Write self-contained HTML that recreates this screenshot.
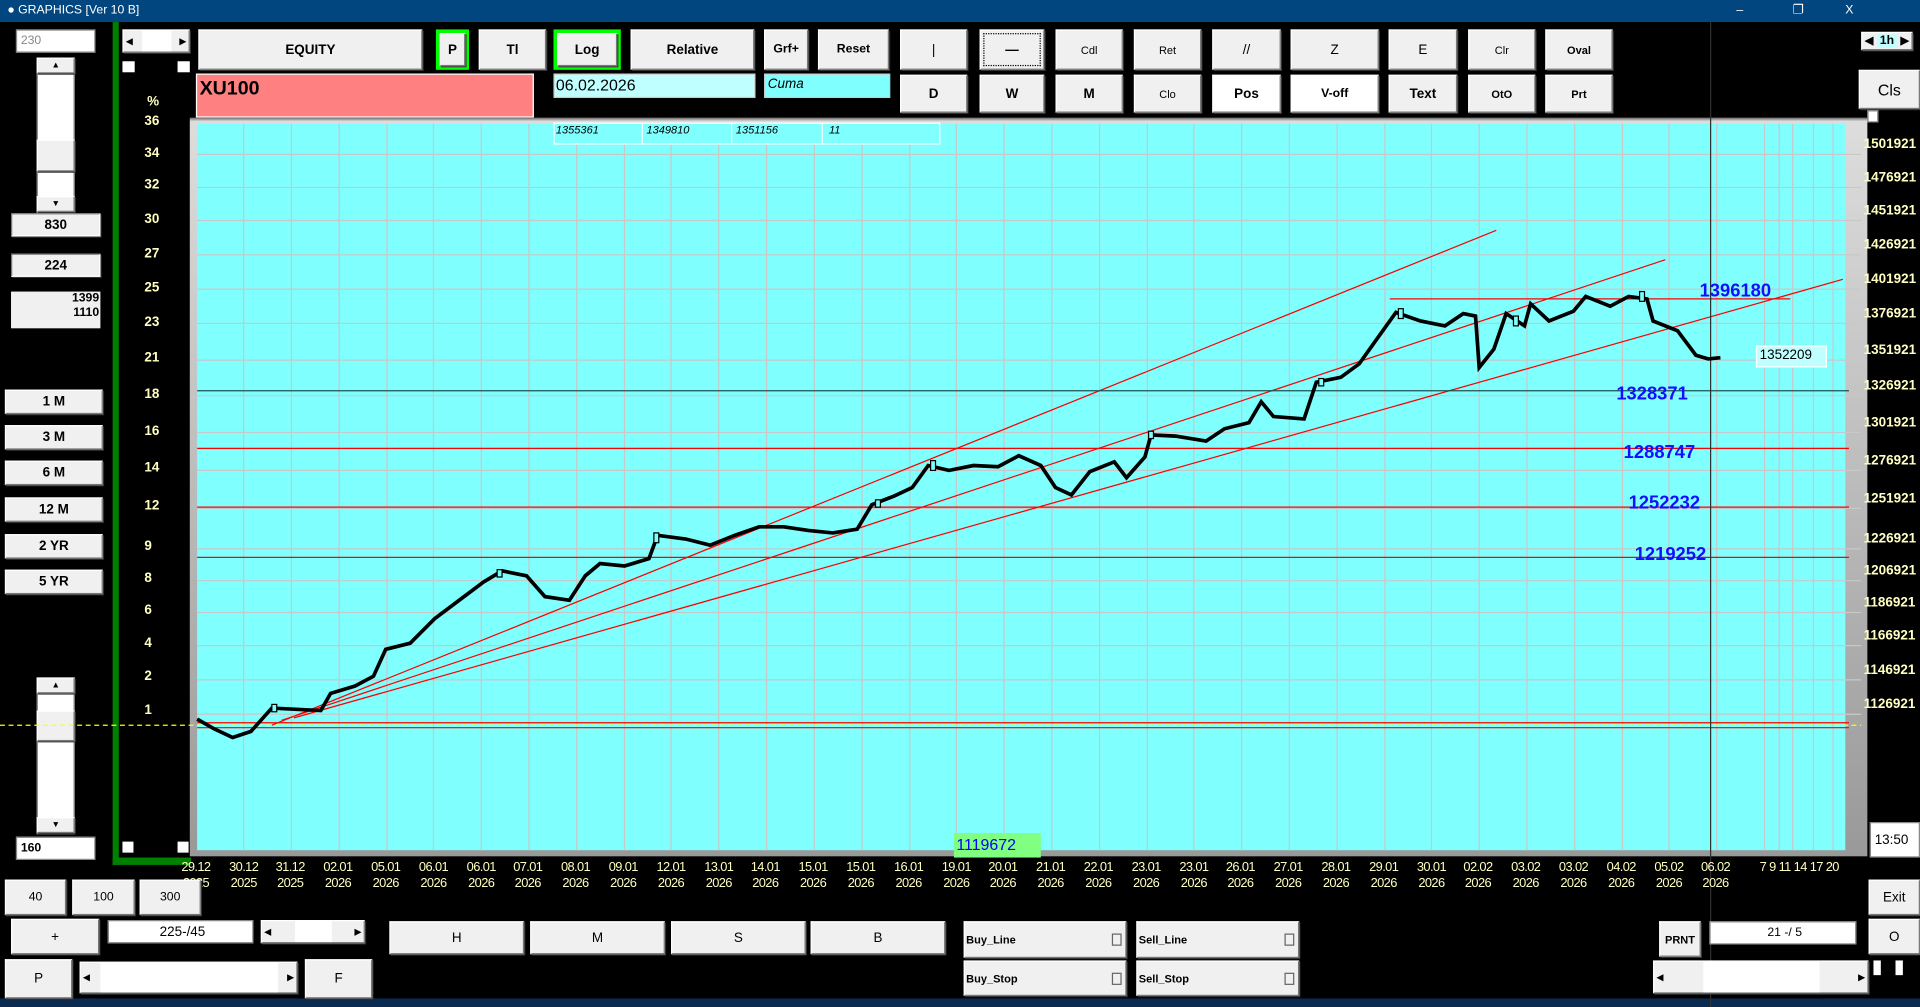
<!DOCTYPE html>
<html><head><meta charset="utf-8"><style>
*{margin:0;padding:0;box-sizing:border-box}
html,body{width:1920px;height:1007px;overflow:hidden;background:#000}
#w{position:absolute;left:0;top:0;width:1568px;height:822px;transform:scale(1.22449,1.22506);transform-origin:0 0;background:#000;font-family:"Liberation Sans",sans-serif}
.a{position:absolute}
.b{position:absolute;background:#f0f0f0;border:1px solid #fff;border-right-color:#777;border-bottom-color:#777;box-shadow:1px 1px 0 #333;display:flex;align-items:center;justify-content:center;font-size:11px;font-weight:bold;color:#000}
.t{position:absolute;background:#fff;border:1px solid #888;font-size:10px;display:flex;align-items:center;padding-left:3px}
.y{position:absolute;color:#ffffc0;font-size:11px;font-weight:bold;text-align:center;width:20px}
.r{position:absolute;color:#ffffc0;font-size:11px;font-weight:bold;left:1522px}
.d{position:absolute;color:#ffffc0;font-size:10.5px;letter-spacing:-0.5px;width:36px;text-align:center;line-height:13px;white-space:nowrap}
.bl{position:absolute;color:#1010ff;font-size:15px;font-weight:bold}
</style></head><body><div id="w">
<div class="a" style="left:0;top:0;width:1568px;height:18px;background:#02467f;color:#fff;font-size:10px;line-height:18px;padding-left:6px">● GRAPHICS [Ver 10 B]<span style="position:absolute;left:1418px">–</span><span style="position:absolute;left:1464px">❐</span><span style="position:absolute;left:1507px">X</span></div>
<div class="a" style="left:0;top:815px;width:1568px;height:7px;background:#0a2a50"></div>
<div class="a" style="left:92px;top:18px;width:5px;height:688px;background:#008000"></div>
<div class="a" style="left:92px;top:700px;width:64px;height:6px;background:#008000"></div>
<!-- left panel -->
<div class="t" style="left:13px;top:24px;width:65px;height:19px;color:#888">230</div>
<div class="a" style="left:30px;top:47px;width:31px;height:127px;background:#fff;border:1px solid #888"></div>
<div class="b" style="left:30px;top:47px;width:31px;height:13px;font-size:7px">▲</div>
<div class="b" style="left:30px;top:114px;width:31px;height:26px"></div>
<div class="b" style="left:30px;top:160px;width:31px;height:13px;font-size:7px">▼</div>
<div class="b" style="left:9px;top:174px;width:73px;height:19px;border-color:#777 #fff #fff #777">830</div>
<div class="b" style="left:9px;top:207px;width:73px;height:19px;border-color:#777 #fff #fff #777">224</div>
<div class="a" style="left:9px;top:238px;width:73px;height:30px;background:#f0f0f0;font-size:10px;font-weight:bold;text-align:right;padding-right:1px;line-height:12px">1399<br>1110</div>
<div class="b" style="left:4px;top:318px;width:80px;height:20px">1 M</div>
<div class="b" style="left:4px;top:347px;width:80px;height:20px">3 M</div>
<div class="b" style="left:4px;top:376px;width:80px;height:20px">6 M</div>
<div class="b" style="left:4px;top:406px;width:80px;height:20px">12 M</div>
<div class="b" style="left:4px;top:436px;width:80px;height:20px">2 YR</div>
<div class="b" style="left:4px;top:465px;width:80px;height:20px">5 YR</div>
<div class="a" style="left:30px;top:553px;width:31px;height:128px;background:#fff;border:1px solid #888"></div>
<div class="b" style="left:30px;top:553px;width:31px;height:13px;font-size:7px">▲</div>
<div class="b" style="left:30px;top:580px;width:31px;height:25px"></div>
<div class="b" style="left:30px;top:667px;width:31px;height:13px;font-size:7px">▼</div>
<div class="t" style="left:13px;top:683px;width:65px;height:19px;font-weight:bold">160</div>
<div class="b" style="left:100px;top:24px;width:55px;height:19px;font-size:7px;justify-content:space-between;padding:0 2px">◀<span style="width:24px;height:17px;background:#fff"></span>▶</div>
<div class="a" style="left:100px;top:50px;width:10px;height:9px;background:#fff"></div>
<div class="a" style="left:145px;top:50px;width:10px;height:9px;background:#fff"></div>
<div class="a" style="left:100px;top:687px;width:9px;height:9px;background:#fff"></div>
<div class="a" style="left:145px;top:687px;width:9px;height:9px;background:#fff"></div>
<div class="y" style="left:115px;top:77px">%</div>
<div class="y" style="left:114px;top:93px">36</div><div class="y" style="left:114px;top:119px">34</div><div class="y" style="left:114px;top:145px">32</div><div class="y" style="left:114px;top:173px">30</div><div class="y" style="left:114px;top:201px">27</div><div class="y" style="left:114px;top:229px">25</div><div class="y" style="left:114px;top:257px">23</div><div class="y" style="left:114px;top:286px">21</div><div class="y" style="left:114px;top:316px">18</div><div class="y" style="left:114px;top:346px">16</div><div class="y" style="left:114px;top:376px">14</div><div class="y" style="left:114px;top:407px">12</div><div class="y" style="left:111px;top:440px">9</div><div class="y" style="left:111px;top:466px">8</div><div class="y" style="left:111px;top:492px">6</div><div class="y" style="left:111px;top:519px">4</div><div class="y" style="left:111px;top:546px">2</div><div class="y" style="left:111px;top:574px">1</div>
<!-- top buttons -->
<div class="b" style="left:162px;top:24px;width:183px;height:33px">EQUITY</div>
<div class="a" style="left:356px;top:24px;width:27px;height:33px;background:#00ff00"></div><div class="b" style="left:359px;top:27px;width:21px;height:27px">P</div>
<div class="b" style="left:391px;top:24px;width:55px;height:33px">Tl</div>
<div class="a" style="left:452px;top:24px;width:55px;height:33px;background:#00ff00"></div><div class="b" style="left:455px;top:27px;width:49px;height:27px">Log</div>
<div class="b" style="left:515px;top:24px;width:101px;height:33px">Relative</div>
<div class="b" style="left:624px;top:24px;width:36px;height:33px;font-size:10px">Grf+</div>
<div class="b" style="left:668px;top:24px;width:58px;height:33px;font-size:10px">Reset</div>
<div class="b" style="left:735px;top:24px;width:55px;height:33px;font-weight:normal">|</div>
<div class="b" style="left:800px;top:24px;width:53px;height:33px;outline:1px dotted #000;outline-offset:-4px">—</div>
<div class="b" style="left:862px;top:24px;width:55px;height:33px;font-size:9px;font-weight:normal">Cdl</div>
<div class="b" style="left:926px;top:24px;width:55px;height:33px;font-size:9px;font-weight:normal">Ret</div>
<div class="b" style="left:990px;top:24px;width:56px;height:33px;font-weight:normal">//</div>
<div class="b" style="left:1054px;top:24px;width:72px;height:33px;font-weight:normal">Z</div>
<div class="b" style="left:1134px;top:24px;width:56px;height:33px;font-weight:normal">E</div>
<div class="b" style="left:1199px;top:24px;width:55px;height:33px;font-size:9px;font-weight:normal">Clr</div>
<div class="b" style="left:1262px;top:24px;width:55px;height:33px;font-size:9px">Oval</div>
<div class="b" style="left:735px;top:61px;width:55px;height:31px">D</div>
<div class="b" style="left:800px;top:61px;width:53px;height:31px">W</div>
<div class="b" style="left:862px;top:61px;width:55px;height:31px">M</div>
<div class="b" style="left:926px;top:61px;width:55px;height:31px;font-size:9px;font-weight:normal">Clo</div>
<div class="b" style="left:990px;top:61px;width:56px;height:31px;background:#fff">Pos</div>
<div class="b" style="left:1054px;top:61px;width:72px;height:31px;background:#fff;font-size:10px">V-off</div>
<div class="b" style="left:1134px;top:61px;width:56px;height:31px">Text</div>
<div class="b" style="left:1199px;top:61px;width:55px;height:31px;font-size:9px">OtO</div>
<div class="b" style="left:1262px;top:61px;width:55px;height:31px;font-size:9px">Prt</div>
<div class="a" style="left:160px;top:60px;width:276px;height:36px;background:#ff8080;border:1px solid #fff;font-size:16px;font-weight:bold;padding:3px 2px">XU100</div>
<div class="a" style="left:452px;top:60px;width:165px;height:20px;background:#c0ffff;border:1px solid #ccc;font-size:13px;padding:1px 1px">06.02.2026</div>
<div class="a" style="left:624px;top:60px;width:103px;height:20px;background:#80ffff;border:1px solid #ccc;font-size:11px;font-style:italic;padding:2px 2px">Cuma</div>
<!-- right -->
<div class="b" style="left:1520px;top:26px;width:42px;height:15px;font-size:9px;justify-content:space-between;padding:0 2px">◀<span style="background:#c0ffff;font-size:10px;padding:0 2px">1h</span>▶</div>
<div class="b" style="left:1518px;top:57px;width:50px;height:32px;font-weight:normal;font-size:13px">Cls</div>
<div class="a" style="left:1525px;top:90px;width:9px;height:10px;background:#fff;border:1px solid #888"></div>
<div class="t" style="left:1527px;top:671px;width:41px;height:29px;font-size:11px">13:50</div>
<!-- chart -->
<div class="a" style="left:155px;top:96px;width:1370px;height:603px;background:linear-gradient(#666,#ddd 3px,#999)"></div>
<svg class="a" style="left:0;top:0" width="1568" height="822">
<rect x="161" y="101" width="1346" height="593" fill="#80ffff"/>
<g stroke="#c8c8c8" stroke-width="1">
<path d="M199 101V694M238 101V694M277 101V694M316 101V694M354 101V694M393 101V694M432 101V694M471 101V694M510 101V694M548 101V694M587 101V694M626 101V694M665 101V694M704 101V694M743 101V694M781 101V694M820 101V694M859 101V694M898 101V694M937 101V694M975 101V694M1014 101V694M1053 101V694M1092 101V694M1131 101V694M1169 101V694M1208 101V694M1247 101V694M1286 101V694M1325 101V694M1363 101V694M1402 101V694M1441 101V694M1453 101V694M1464 101V694M1481 101V694M1497 101V694"/>
<path d="M161 126H1520M161 153H1520M161 180H1520M161 208H1520M161 236H1520M161 264H1520M161 294H1520M161 323H1520M161 353H1520M161 384H1520M161 415H1520M161 448H1520M161 474H1520M161 500H1520M161 527H1520M161 555H1520M161 583H1520"/>
</g>
<path d="M0 592H1520" stroke="#ffff00" stroke-width="1" stroke-dasharray="4 3"/>
<g stroke="#ff0000" stroke-width="1" fill="none">
<path d="M161 366H1510M161 414H1510M161 455H1510M161 590H1510M161 594H1510"/>
<path d="M1135 244H1462"/>
<path d="M222 592L1222 188M230 588L1360 212M240 586L1505 228"/>
</g>
<path d="M161 319H1510" stroke="#205050" stroke-width="1"/>
<path d="M1397 18V822" stroke="#303030" stroke-width="1"/>
<polyline fill="none" stroke="#000" stroke-width="3" stroke-linejoin="miter" points="161,587 175,595 190,602 205,597 222,578 262,580 270,566 290,560 305,552 315,530 335,525 355,505 375,490 395,475 410,466 430,470 445,487 465,490 478,470 490,460 510,462 530,456 537,437 560,440 580,445 600,437 620,430 640,430 660,433 680,435 700,432 712,412 730,405 745,398 758,380 775,384 795,380 815,381 832,372 850,380 862,398 875,404 890,385 910,377 920,390 935,373 940,355 960,356 985,360 1000,350 1020,345 1030,328 1040,340 1065,342 1075,312 1095,308 1110,297 1125,276 1140,255 1160,262 1180,266 1195,256 1205,258 1208,300 1220,285 1230,256 1245,266 1250,248 1265,262 1285,254 1295,242 1315,250 1330,242 1345,244 1350,262 1370,270 1385,290 1395,293 1405,292"/>
<g fill="#80ffff" stroke="#000" stroke-width="1"><rect x="222" y="575" width="4" height="6"/><rect x="406" y="465" width="4" height="6"/><rect x="534" y="435" width="4" height="8"/><rect x="715" y="408" width="4" height="6"/><rect x="760" y="376" width="4" height="8"/><rect x="938" y="352" width="4" height="6"/><rect x="1077" y="309" width="4" height="6"/><rect x="1142" y="252" width="4" height="8"/><rect x="1236" y="258" width="4" height="8"/><rect x="1339" y="238" width="4" height="8"/></g>
</svg>
<div class="a" style="left:452px;top:100px;width:316px;height:18px;background:#80ffff;border:1px solid #fff"></div>
<div class="a" style="left:452px;top:101px;font-size:9px;font-style:italic;width:316px"><span class="a" style="left:2px">1355361</span><span class="a" style="left:76px">1349810</span><span class="a" style="left:149px">1351156</span><span class="a" style="left:225px">11</span></div>
<div class="a" style="left:524px;top:100px;width:1px;height:18px;background:#fff"></div><div class="a" style="left:597px;top:100px;width:1px;height:18px;background:#fff"></div><div class="a" style="left:671px;top:100px;width:1px;height:18px;background:#fff"></div>
<div class="bl" style="left:1388px;top:229px">1396180</div>
<div class="bl" style="left:1320px;top:313px">1328371</div>
<div class="bl" style="left:1326px;top:361px">1288747</div>
<div class="bl" style="left:1330px;top:402px">1252232</div>
<div class="bl" style="left:1335px;top:444px">1219252</div>
<div class="a" style="left:1434px;top:282px;width:58px;height:18px;background:#c0ffff;border:1px solid #fff;font-size:11px;padding:1px 2px">1352209</div>
<div class="a" style="left:779px;top:680px;width:71px;height:20px;background:#80ff80;color:#0000ff;font-size:13px;padding:2px 2px">1119672</div>
<div class="r" style="top:112px">1501921</div><div class="r" style="top:139px">1476921</div><div class="r" style="top:166px">1451921</div><div class="r" style="top:194px">1426921</div><div class="r" style="top:222px">1401921</div><div class="r" style="top:250px">1376921</div><div class="r" style="top:280px">1351921</div><div class="r" style="top:309px">1326921</div><div class="r" style="top:339px">1301921</div><div class="r" style="top:370px">1276921</div><div class="r" style="top:401px">1251921</div><div class="r" style="top:434px">1226921</div><div class="r" style="top:460px">1206921</div><div class="r" style="top:486px">1186921</div><div class="r" style="top:513px">1166921</div><div class="r" style="top:541px">1146921</div><div class="r" style="top:569px">1126921</div>
<!-- dates -->
<div class="a" style="left:0;top:702px">
<div class="d" style="left:142px">29.12<br>2025</div><div class="d" style="left:181px">30.12<br>2025</div><div class="d" style="left:219px">31.12<br>2025</div><div class="d" style="left:258px">02.01<br>2026</div><div class="d" style="left:297px">05.01<br>2026</div><div class="d" style="left:336px">06.01<br>2026</div><div class="d" style="left:375px">06.01<br>2026</div><div class="d" style="left:413px">07.01<br>2026</div><div class="d" style="left:452px">08.01<br>2026</div><div class="d" style="left:491px">09.01<br>2026</div><div class="d" style="left:530px">12.01<br>2026</div><div class="d" style="left:569px">13.01<br>2026</div><div class="d" style="left:607px">14.01<br>2026</div><div class="d" style="left:646px">15.01<br>2026</div><div class="d" style="left:685px">15.01<br>2026</div><div class="d" style="left:724px">16.01<br>2026</div><div class="d" style="left:763px">19.01<br>2026</div><div class="d" style="left:801px">20.01<br>2026</div><div class="d" style="left:840px">21.01<br>2026</div><div class="d" style="left:879px">22.01<br>2026</div><div class="d" style="left:918px">23.01<br>2026</div><div class="d" style="left:957px">23.01<br>2026</div><div class="d" style="left:995px">26.01<br>2026</div><div class="d" style="left:1034px">27.01<br>2026</div><div class="d" style="left:1073px">28.01<br>2026</div><div class="d" style="left:1112px">29.01<br>2026</div><div class="d" style="left:1151px">30.01<br>2026</div><div class="d" style="left:1189px">02.02<br>2026</div><div class="d" style="left:1228px">03.02<br>2026</div><div class="d" style="left:1267px">03.02<br>2026</div><div class="d" style="left:1306px">04.02<br>2026</div><div class="d" style="left:1345px">05.02<br>2026</div><div class="d" style="left:1383px">06.02<br>2026</div>
<div class="d" style="left:1437px;width:90px;text-align:left;word-spacing:0px">7 9 11 14 17 20</div>
</div>
<!-- bottom -->
<div class="b" style="left:4px;top:718px;width:50px;height:29px;font-weight:normal;font-size:10px">40</div>
<div class="b" style="left:59px;top:718px;width:51px;height:29px;font-weight:normal;font-size:10px">100</div>
<div class="b" style="left:114px;top:718px;width:50px;height:29px;font-weight:normal;font-size:10px">300</div>
<div class="b" style="left:9px;top:750px;width:72px;height:29px;font-weight:normal">+</div>
<div class="t" style="left:88px;top:751px;width:119px;height:19px;justify-content:center;font-size:11px">225-/45</div>
<div class="b" style="left:213px;top:751px;width:85px;height:19px;font-size:7px;justify-content:space-between;padding:0 2px">◀<span style="width:30px;height:17px;background:#fff"></span>▶</div>
<div class="b" style="left:318px;top:752px;width:110px;height:27px;font-weight:normal">H</div>
<div class="b" style="left:433px;top:752px;width:110px;height:27px;font-weight:normal">M</div>
<div class="b" style="left:548px;top:752px;width:110px;height:27px;font-weight:normal">S</div>
<div class="b" style="left:662px;top:752px;width:110px;height:27px;font-weight:normal">B</div>
<div class="b" style="left:787px;top:752px;width:133px;height:30px;justify-content:space-between;padding:0 3px 0 1px;font-size:9px">Buy_Line<span style="width:8px;height:10px;border:1px solid #666"></span></div>
<div class="b" style="left:928px;top:752px;width:133px;height:30px;justify-content:space-between;padding:0 3px 0 1px;font-size:9px">Sell_Line<span style="width:8px;height:10px;border:1px solid #666"></span></div>
<div class="b" style="left:787px;top:784px;width:133px;height:29px;justify-content:space-between;padding:0 3px 0 1px;font-size:9px">Buy_Stop<span style="width:8px;height:10px;border:1px solid #666"></span></div>
<div class="b" style="left:928px;top:784px;width:133px;height:29px;justify-content:space-between;padding:0 3px 0 1px;font-size:9px">Sell_Stop<span style="width:8px;height:10px;border:1px solid #666"></span></div>
<div class="b" style="left:4px;top:783px;width:55px;height:32px;font-weight:normal">P</div>
<div class="b" style="left:65px;top:785px;width:178px;height:26px;font-size:7px;justify-content:space-between;padding:0 2px">◀<span style="width:145px;height:24px;background:#fff"></span>▶</div>
<div class="b" style="left:249px;top:783px;width:55px;height:32px;font-weight:normal">F</div>
<div class="b" style="left:1355px;top:752px;width:34px;height:29px;font-size:9px">PRNT</div>
<div class="t" style="left:1396px;top:752px;width:120px;height:19px;justify-content:center;font-size:10px">21 -/ 5</div>
<div class="b" style="left:1526px;top:718px;width:42px;height:29px;font-weight:normal">Exit</div>
<div class="b" style="left:1526px;top:750px;width:42px;height:29px;font-weight:normal">O</div>
<div class="b" style="left:1350px;top:784px;width:176px;height:27px;font-size:7px;justify-content:space-between;padding:0 2px">◀<span style="width:95px;height:25px;background:#fff"></span>▶</div>
<div class="a" style="left:1530px;top:784px;width:6px;height:12px;background:#fff"></div><div class="a" style="left:1548px;top:784px;width:6px;height:12px;background:#fff"></div>
</div></body></html>
